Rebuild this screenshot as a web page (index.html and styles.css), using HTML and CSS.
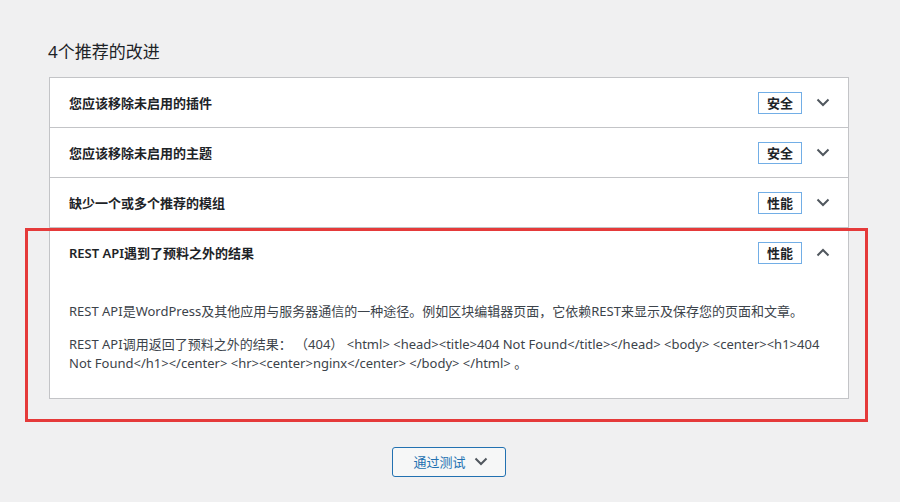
FILE: index.html
```html
<!doctype html>
<html>
<head>
<meta charset="utf-8">
<link rel="stylesheet" href="styles.css">
</head>
<body>
	<div class="wrap">
		<h2 class="title">4个推荐的改进</h2>

		<div class="accordion">
			<div class="item">
				<div class="head">
					<span class="label">您应该移除未启用的插件</span>
					<span class="badge">安全</span>
					<svg class="chev" width="14" height="9" viewBox="0 0 14 9"><polyline points="1.5,1.5 7,7 12.5,1.5"/></svg>
				</div>
			</div>
			<div class="item">
				<div class="head">
					<span class="label">您应该移除未启用的主题</span>
					<span class="badge">安全</span>
					<svg class="chev" width="14" height="9" viewBox="0 0 14 9"><polyline points="1.5,1.5 7,7 12.5,1.5"/></svg>
				</div>
			</div>
			<div class="item">
				<div class="head">
					<span class="label">缺少一个或多个推荐的模组</span>
					<span class="badge">性能</span>
					<svg class="chev" width="14" height="9" viewBox="0 0 14 9"><polyline points="1.5,1.5 7,7 12.5,1.5"/></svg>
				</div>
			</div>
			<div class="item open">
				<div class="head">
					<span class="label">REST API遇到了预料之外的结果</span>
					<span class="badge">性能</span>
					<svg class="chev" width="14" height="9" viewBox="0 0 14 9"><polyline points="1.5,7.5 7,2 12.5,7.5"/></svg>
				</div>
				<div class="body">
					<p>REST API是WordPress及其他应用与服务器通信的一种途径。例如区块编辑器页面，它依赖REST来显示及保存您的页面和文章。</p>
					<p>REST API调用返回了预料之外的结果： （404） &lt;html&gt; &lt;head&gt;&lt;title&gt;404 Not Found&lt;/title&gt;&lt;/head&gt; &lt;body&gt; &lt;center&gt;&lt;h1&gt;404 Not Found&lt;/h1&gt;&lt;/center&gt; &lt;hr&gt;&lt;center&gt;nginx&lt;/center&gt; &lt;/body&gt; &lt;/html&gt; 。</p>
				</div>
			</div>
		</div>

		<div class="actions">
			<button class="toggle">通过测试 <svg class="chev" width="14" height="9" viewBox="0 0 14 9"><polyline points="1.5,1.5 7,7 12.5,1.5"/></svg></button>
		</div>
	</div>

	<div class="highlight"></div>
</body>
</html>
```

FILE: styles.css
```css
html, body {
	margin: 0;
	padding: 0;
	background: #f0f0f1;
	font-family: "Noto Sans", "Noto Sans CJK SC", sans-serif;
	color: #1d2327;
}

body {
	position: relative;
	height: 502px;
	overflow: hidden;
}

.wrap {
	width: 800px;
	margin-left: 49px;
	padding-top: 40px;
}

.title {
	margin: 0 0 13px -1px;
	font-size: 17px;
	font-weight: 400;
	line-height: 24px;
}

.accordion {
	background: #fff;
	border: 1px solid #c3c4c7;
}

.item + .item {
	border-top: 1px solid #c3c4c7;
}

.head {
	display: flex;
	align-items: center;
	height: 49px;
	padding: 0 18px 0 19px;
}

.label {
	flex: 1;
	font-size: 13px;
	font-weight: 600;
}

.badge {
	box-sizing: border-box;
	width: 44px;
	height: 22px;
	border: 1px solid #72aee6;
	font-size: 13px;
	font-weight: 600;
	line-height: 20px;
	text-align: center;
	margin-right: 14px;
}

.chev polyline {
	fill: none;
	stroke: #50575e;
	stroke-width: 2;
}

.body {
	padding: 12px 19px 11px;
	font-size: 13px;
	line-height: 19.5px;
	color: #3c434a;
}

.body p {
	margin: 13px 0;
}

.actions {
	margin-top: 48px;
	text-align: center;
}

.toggle {
	box-sizing: border-box;
	width: 114px;
	height: 30px;
	margin-left: -1px;
	background: #f6f7f7;
	border: 1px solid #2271b1;
	border-radius: 3px;
	color: #2271b1;
	font-family: "Noto Sans", "Noto Sans CJK SC", sans-serif;
	font-size: 13px;
	display: inline-flex;
	align-items: center;
	justify-content: center;
	gap: 8px;
	padding: 0 0 0 4px;
}

.highlight {
	position: absolute;
	left: 25px;
	top: 228px;
	width: 843px;
	height: 194px;
	box-sizing: border-box;
	border: 3px solid #e53a3a;
}
```
